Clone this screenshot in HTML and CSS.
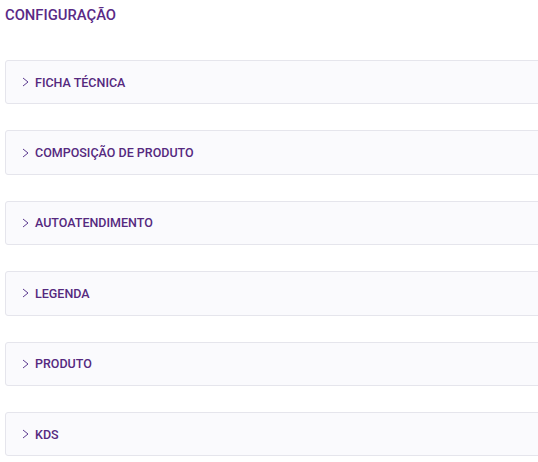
FILE: index.html
```html
<!DOCTYPE html>
<html lang="pt">
<head>
<meta charset="utf-8">
<link rel="stylesheet" href="styles.css">
</head>
<body>
<div class="page">
  <h1 class="title">CONFIGURAÇÃO</h1>
  <div class="list">
    <div class="panel"><svg class="chev" viewBox="0 0 7 10" width="7" height="10"><path d="M1 1 L6 5 L1 9" fill="none" stroke="#5c3a90" stroke-width="1"/></svg><span class="label">FICHA TÉCNICA</span></div>
    <div class="panel"><svg class="chev" viewBox="0 0 7 10" width="7" height="10"><path d="M1 1 L6 5 L1 9" fill="none" stroke="#5c3a90" stroke-width="1"/></svg><span class="label">COMPOSIÇÃO DE PRODUTO</span></div>
    <div class="panel"><svg class="chev" viewBox="0 0 7 10" width="7" height="10"><path d="M1 1 L6 5 L1 9" fill="none" stroke="#5c3a90" stroke-width="1"/></svg><span class="label">AUTOATENDIMENTO</span></div>
    <div class="panel"><svg class="chev" viewBox="0 0 7 10" width="7" height="10"><path d="M1 1 L6 5 L1 9" fill="none" stroke="#5c3a90" stroke-width="1"/></svg><span class="label">LEGENDA</span></div>
    <div class="panel"><svg class="chev" viewBox="0 0 7 10" width="7" height="10"><path d="M1 1 L6 5 L1 9" fill="none" stroke="#5c3a90" stroke-width="1"/></svg><span class="label">PRODUTO</span></div>
    <div class="panel"><svg class="chev" viewBox="0 0 7 10" width="7" height="10"><path d="M1 1 L6 5 L1 9" fill="none" stroke="#5c3a90" stroke-width="1"/></svg><span class="label">KDS</span></div>
  </div>
</div>
</body>
</html>
```
FILE: styles.css
```css
html, body { margin: 0; padding: 0; background: #fff; }
body { font-family: Roboto, "Liberation Sans", sans-serif; overflow: hidden; }
.page { padding: 5px 0 0 5px; }
.title {
  margin: 0;
  font-size: 14.8px;
  font-weight: 500;
  color: #5a2a86;
  line-height: 20px;
}
.list {
  margin-top: 35px;
  display: flex;
  flex-direction: column;
  gap: 26px;
  margin-right: -20px;
}
.panel {
  height: 42.4px;
  border: 1px solid #e5e5ec;
  border-radius: 3px;
  background: #fafafd;
  display: flex;
  align-items: center;
  padding-left: 16px;
  color: #55297f;
  font-size: 12.5px;
  font-weight: 500;
}
.chev { display: block; margin-right: 6px; }
.label { letter-spacing: 0; }
```
